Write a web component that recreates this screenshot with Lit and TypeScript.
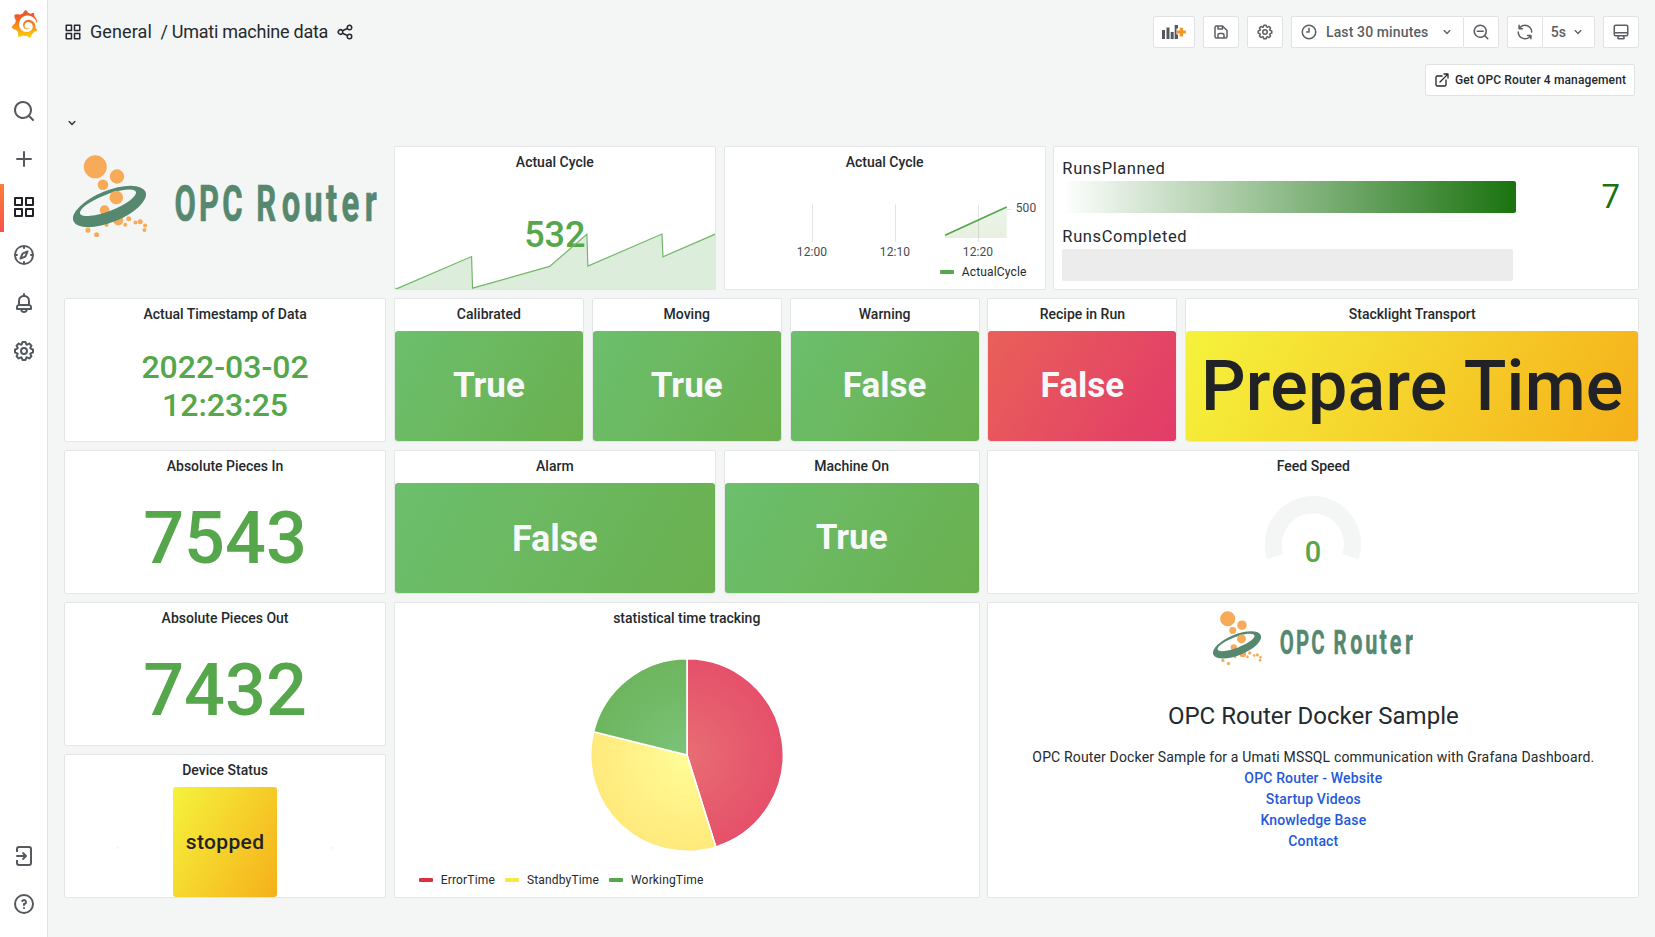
import { LitElement, html, css, svg } from "lit";
import { customElement, property } from "lit/decorators.js";

const ICONS: Record<string, string> = {
  apps: "M10,13H3a1,1,0,0,0-1,1v7a1,1,0,0,0,1,1h7a1,1,0,0,0,1-1V14A1,1,0,0,0,10,13ZM9,20H4V15H9ZM21,2H14a1,1,0,0,0-1,1v7a1,1,0,0,0,1,1h7a1,1,0,0,0,1-1V3A1,1,0,0,0,21,2ZM20,9H15V4h5Zm1,4H14a1,1,0,0,0-1,1v7a1,1,0,0,0,1,1h7a1,1,0,0,0,1-1V14A1,1,0,0,0,21,13Zm-1,7H15V15h5ZM10,2H3A1,1,0,0,0,2,3v7a1,1,0,0,0,1,1h7a1,1,0,0,0,1-1V3A1,1,0,0,0,10,2ZM9,9H4V4H9Z",
  search: "M21.71,20.29,18,16.61A9,9,0,1,0,16.61,18l3.68,3.68a1,1,0,0,0,1.42,0A1,1,0,0,0,21.71,20.29ZM11,18a7,7,0,1,1,7-7A7,7,0,0,1,11,18Z",
  zoomOut: "M21.71,20.29,18,16.61A9,9,0,1,0,16.61,18l3.68,3.68a1,1,0,0,0,1.42,0A1,1,0,0,0,21.71,20.29ZM11,18a7,7,0,1,1,7-7A7,7,0,0,1,11,18ZM15,10H7a1,1,0,0,0,0,2h8a1,1,0,0,0,0-2Z",
  plus: "M19,11H13V5a1,1,0,0,0-2,0v6H5a1,1,0,0,0,0,2h6v6a1,1,0,0,0,2,0V13h6a1,1,0,0,0,0-2Z",
  compass: "M12,2A10,10,0,1,0,22,12,10,10,0,0,0,12,2Zm1,17.93V19a1,1,0,0,0-2,0v.93A8,8,0,0,1,4.07,13H5a1,1,0,0,0,0-2H4.07A8,8,0,0,1,11,4.07V5a1,1,0,0,0,2,0V4.07A8,8,0,0,1,19.93,11H19a1,1,0,0,0,0,2h.93A8,8,0,0,1,13,19.93ZM15.14,7.55l-5,2.12a1,1,0,0,0-.52.52l-2.12,5a1,1,0,0,0,.21,1.1,1,1,0,0,0,.7.3.93.93,0,0,0,.4-.09l5-2.12a1,1,0,0,0,.52-.52l2.12-5a1,1,0,0,0-1.31-1.31Zm-2.49,5.1-2.28,1,1-2.28,2.28-1Z",
  bell: "M18,13.18V10a6,6,0,0,0-5-5.91V3a1,1,0,0,0-2,0V4.09A6,6,0,0,0,6,10v3.18A3,3,0,0,0,4,16v2a1,1,0,0,0,1,1H8.14a4,4,0,0,0,7.72,0H19a1,1,0,0,0,1-1V16A3,3,0,0,0,18,13.18ZM8,10a4,4,0,0,1,8,0v3H8Zm4,10a2,2,0,0,1-1.72-1h3.44A2,2,0,0,1,12,20Zm6-3H6V16a1,1,0,0,1,1-1H17a1,1,0,0,1,1,1Z",
  cog: "M21.32,9.55l-1.89-.63.89-1.78A1,1,0,0,0,20.13,6L18,3.87a1,1,0,0,0-1.15-.19l-1.78.89-.63-1.89A1,1,0,0,0,13.5,2h-3a1,1,0,0,0-.95.68L8.92,4.57,7.14,3.68A1,1,0,0,0,6,3.87L3.87,6a1,1,0,0,0-.19,1.15l.89,1.78-1.89.63A1,1,0,0,0,2,10.5v3a1,1,0,0,0,.68.95l1.89.63-.89,1.78A1,1,0,0,0,3.87,18L6,20.13a1,1,0,0,0,1.15.19l1.78-.89.63,1.89a1,1,0,0,0,.95.68h3a1,1,0,0,0,.95-.68l.63-1.89,1.78.89A1,1,0,0,0,18,20.13L20.13,18a1,1,0,0,0,.19-1.15l-.89-1.78,1.89-.63A1,1,0,0,0,22,13.5v-3A1,1,0,0,0,21.32,9.55ZM20,12.78l-1.2.4A2,2,0,0,0,17.64,16l.57,1.14-1.1,1.1L16,17.64a2,2,0,0,0-2.79,1.16l-.4,1.2H11.22l-.4-1.2A2,2,0,0,0,8,17.64l-1.14.57-1.1-1.1L6.36,16A2,2,0,0,0,5.2,13.18L4,12.78V11.22l1.2-.4A2,2,0,0,0,6.36,8L5.79,6.89l1.1-1.1L8,6.36A2,2,0,0,0,10.82,5.2l.4-1.2h1.56l.4,1.2A2,2,0,0,0,16,6.36l1.14-.57,1.1,1.1L17.64,8a2,2,0,0,0,1.16,2.79l1.2.4ZM12,8a4,4,0,1,0,4,4A4,4,0,0,0,12,8Zm0,6a2,2,0,1,1,2-2A2,2,0,0,1,12,14Z",
  save: "M20.71,9.29l-6-6a1,1,0,0,0-.32-.21A1.09,1.09,0,0,0,14,3H6A3,3,0,0,0,3,6V18a3,3,0,0,0,3,3H18a3,3,0,0,0,3-3V10A1,1,0,0,0,20.71,9.29ZM9,5h4V7H9Zm6,14H9V16a1,1,0,0,1,1-1h4a1,1,0,0,1,1,1Zm4-1a1,1,0,0,1-1,1H17V16a3,3,0,0,0-3-3H10a3,3,0,0,0-3,3v3H6a1,1,0,0,1-1-1V6A1,1,0,0,1,6,5H7V8A1,1,0,0,0,8,9h6a1,1,0,0,0,1-1V6.41l4,4Z",
  clock: "M12,2A10,10,0,1,0,22,12,10,10,0,0,0,12,2Zm0,18a8,8,0,1,1,8-8A8,8,0,0,1,12,20ZM12,6a1,1,0,0,0-1,1v4H9a1,1,0,0,0,0,2h3a1,1,0,0,0,1-1V7A1,1,0,0,0,12,6Z",
  down: "M17,9.17a1,1,0,0,0-1.41,0L12,12.71,8.46,9.17a1,1,0,0,0-1.41,0,1,1,0,0,0,0,1.42l4.24,4.24a1,1,0,0,0,1.42,0L17,10.59A1,1,0,0,0,17,9.17Z",
  sync: "M19.91,15.51H15.38a1,1,0,0,0,0,2h2.4A8,8,0,0,1,4,12a1,1,0,0,0-2,0,10,10,0,0,0,16.88,7.23V21a1,1,0,0,0,2,0V16.5A1,1,0,0,0,19.91,15.51ZM12,2A10,10,0,0,0,5.12,4.77V3a1,1,0,0,0-2,0V7.5a1,1,0,0,0,1,1h4.5a1,1,0,0,0,0-2H6.22A8,8,0,0,1,20,12a1,1,0,0,0,2,0A10,10,0,0,0,12,2Z",
  monitor: "M19,2H5A3,3,0,0,0,2,5V15a3,3,0,0,0,3,3H7.64l-.58,1a2,2,0,0,0,0,2,2,2,0,0,0,1.75,1h6.46A2,2,0,0,0,17,21a2,2,0,0,0,0-2l-.59-1H19a3,3,0,0,0,3-3V5A3,3,0,0,0,19,2ZM8.77,20,10,18H14l1.2,2ZM20,15a1,1,0,0,1-1,1H5a1,1,0,0,1-1-1V14H20Zm0-3H4V5A1,1,0,0,1,5,4H19a1,1,0,0,1,1,1Z",
  share: "M18,14a4,4,0,0,0-3.08,1.48l-5.1-2.35a3.64,3.64,0,0,0,0-2.26l5.1-2.35A4,4,0,1,0,14,6a4.17,4.17,0,0,0,.07.71L8.79,9.14a4,4,0,1,0,0,5.72l5.28,2.43A4.17,4.17,0,0,0,14,18a4,4,0,1,0,4-4ZM18,4a2,2,0,1,1-2,2A2,2,0,0,1,18,4ZM6,14a2,2,0,1,1,2-2A2,2,0,0,1,6,14Zm12,6a2,2,0,1,1,2-2A2,2,0,0,1,18,20Z",
  external: "M18,10.82a1,1,0,0,0-1,1V19a1,1,0,0,1-1,1H5a1,1,0,0,1-1-1V8A1,1,0,0,1,5,7h7.18a1,1,0,0,0,0-2H5A3,3,0,0,0,2,8V19a3,3,0,0,0,3,3H16a3,3,0,0,0,3-3V11.82A1,1,0,0,0,18,10.82Zm3.92-8.2a1,1,0,0,0-.54-.54A1,1,0,0,0,21,2H15a1,1,0,0,0,0,2h3.59L8.29,14.29a1,1,0,0,0,0,1.42,1,1,0,0,0,1.42,0L20,5.41V9a1,1,0,0,0,2,0V3A1,1,0,0,0,21.92,2.62Z",
  signin: "M4,8V5A3,3,0,0,1,7,2H17a3,3,0,0,1,3,3V19a3,3,0,0,1-3,3H7a3,3,0,0,1-3-3V16H6v3a1,1,0,0,0,1,1H17a1,1,0,0,0,1-1V5a1,1,0,0,0-1-1H7A1,1,0,0,0,6,5V8ZM5,11h6.6L10.3,9.7a1,1,0,0,1,1.4-1.4l3,3a1,1,0,0,1,0,1.4l-3,3a1,1,0,0,1-1.4-1.4L11.6,13H5a1,1,0,0,1,0-2Z",
  help: "M11.29,15.29a1.58,1.58,0,0,0-.12.15.76.76,0,0,0-.09.18.64.64,0,0,0-.06.18,1.36,1.36,0,0,0,0,.2.84.84,0,0,0,.08.38.9.9,0,0,0,.54.54.94.94,0,0,0,.76,0,.9.9,0,0,0,.54-.54A1,1,0,0,0,13,16a1,1,0,0,0-.29-.71A1,1,0,0,0,11.29,15.29ZM12,2A10,10,0,1,0,22,12,10,10,0,0,0,12,2Zm0,18a8,8,0,1,1,8-8A8,8,0,0,1,12,20ZM12,7A3,3,0,0,0,9.4,8.5a1,1,0,1,0,1.73,1A1,1,0,0,1,12,9a1,1,0,0,1,0,2,1,1,0,0,0-1,1v1a1,1,0,0,0,2,0v-.18A3,3,0,0,0,12,7Z",
};

@customElement("ui-icon")
class UiIcon extends LitElement {
  @property() name = "";
  @property({ type: Number }) size = 16;
  static styles = css`
    :host { display: inline-flex; flex: none; }
    .glyph { display: block; fill: currentColor; }
  `;
  render() {
    return html`<svg class="glyph" width=${this.size} height=${this.size} viewBox="0 0 24 24"><path d=${ICONS[this.name] ?? ""}></path></svg>`;
  }
}

/** Swirl-and-bubbles brand mark followed by its condensed word mark. */
@customElement("opc-logo")
class OpcLogo extends LitElement {
  static styles = css`
    :host { display: block; }
    .mark { display: block; width: 100%; }
    .green { fill: #55886f; }
    .orange { fill: #f7aa58; }
    .word { font: 700 50px Roboto, sans-serif; fill: #55886f; stroke: #55886f; stroke-width: 0.7; letter-spacing: 0; }
    .low { font-size: 53px; }
  `;
  render() {
    const k = 0.62;
    const upper: [string, number][] = [["O", 174.6], ["P", 199.2], ["C", 222.4], ["R", 256.3]];
    const lower: [string, number][] = [["o", 281.8], ["u", 304.4], ["t", 326.2], ["e", 341.8], ["r", 365]];
    const run = (l: [string, number][], cls: string) =>
      svg`<text class=${cls} y="220.3" x=${l.map((c) => (c[1] / k).toFixed(1)).join(" ")}>${l.map((c) => c[0]).join("")}</text>`;
    return html`<svg class="mark" viewBox="73 154.5 304 83">
      <g class="orange">
        <circle cx="95.3" cy="166.3" r="11.5"></circle>
        <circle cx="117" cy="176" r="7.2"></circle>
        <circle cx="103" cy="184.2" r="5.3"></circle>
        <circle cx="104.6" cy="209.7" r="4.8"></circle>
        <circle cx="118.3" cy="220" r="5"></circle>
        <circle cx="106.5" cy="224.5" r="2"></circle>
      </g>
      <path class="green" fill-rule="evenodd"
        d="M73.4,220.6 A38.9,15.8 -22 0 1 145.6,191.4 A38.9,15.8 -22 0 1 73.4,220.6Z M80.1,213.2 A29.9,8.2 -21.3 0 0 135.9,191.4 A29.9,8.2 -21.3 0 0 80.1,213.2Z"></path>
      <g class="orange">
        <circle cx="116.3" cy="197" r="6.8"></circle>
        <circle cx="128.8" cy="218.3" r="2.5"></circle>
        <circle cx="125.3" cy="224.3" r="2"></circle>
        <circle cx="135.5" cy="222.1" r="2"></circle>
        <circle cx="140.3" cy="221.3" r="2.5"></circle>
        <circle cx="145.1" cy="225" r="2"></circle>
        <circle cx="144.5" cy="229.5" r="2"></circle>
        <circle cx="88" cy="229.7" r="2.5"></circle>
        <circle cx="96.6" cy="234.4" r="2.5"></circle>
      </g>
      <g class="word" transform="scale(${k} 1)">${run(upper, "up")}${run(lower, "low")}</g>
    </svg>`;
  }
}

/** White dashboard card with an optional centred title. */
@customElement("dash-panel")
class DashPanel extends LitElement {
  @property() heading = "";
  static styles = css`
    :host {
      display: flex; flex-direction: column; box-sizing: border-box; min-width: 0; min-height: 0; margin-right: -0.3px;
      background: #fff; border: 1px solid #e4e5e6; border-radius: 2px; overflow: hidden;
    }
    .heading {
      flex: none; height: 32px; line-height: 31px; text-align: center; font-size: 14px; font-weight: 500;
      letter-spacing: 0; color: #24292e;
    }
    .body { flex: 1; min-height: 0; display: grid; }
  `;
  render() {
    return html`${this.heading ? html`<div class="heading">${this.heading}</div>` : ""}<div class="body"><slot></slot></div>`;
  }
}

const GRAFANA = "M342,161.2c-0.6-6.1-1.6-13.1-3.6-20.9c-2-7.7-5-16.2-9.4-25c-4.4-8.8-10.1-17.9-17.5-26.8c-2.9-3.5-6.1-6.9-9.5-10.2c5.1-20.3-6.2-37.9-6.2-37.9c-19.5-1.2-31.9,6.1-36.5,9.4c-0.8-0.3-1.5-0.7-2.3-1c-3.3-1.3-6.7-2.6-10.3-3.7c-3.5-1.1-7.1-2.1-10.8-3c-3.7-0.9-7.4-1.6-11.2-2.2c-0.7-0.1-1.3-0.2-2-0.3c-8.5-27.2-32.9-38.6-32.9-38.6c-27.3,17.3-32.4,41.5-32.4,41.5s-0.1,0.5-0.3,1.4c-1.5,0.4-3,0.9-4.5,1.3c-2.1,0.6-4.2,1.4-6.2,2.2c-2.1,0.8-4.1,1.6-6.2,2.5c-4.1,1.8-8.2,3.8-12.2,6c-3.9,2.2-7.7,4.6-11.4,7.1c-0.5-0.2-1-0.4-1-0.4c-37.8-14.4-71.3,2.9-71.3,2.9c-3.1,40.2,15.1,65.5,18.7,70.1c-0.9,2.5-1.7,5-2.5,7.5c-2.8,9.1-4.9,18.4-6.2,28.1c-0.2,1.4-0.4,2.8-0.5,4.2C18.8,192.7,8.5,228,8.5,228c29.1,33.5,63.1,35.6,63.1,35.6c0,0,0.1-0.1,0.1-0.1c4.3,7.7,9.3,15,14.9,21.9c2.4,2.9,4.8,5.6,7.4,8.3c-10.6,30.4,1.5,55.6,1.5,55.6c32.4,1.2,53.7-14.2,58.2-17.7c3.2,1.1,6.5,2.1,9.8,2.9c10,2.6,20.2,4.1,30.4,4.5c2.5,0.1,5.1,0.2,7.6,0.1l1.2,0l0.8,0l1.6,0l1.6-0.1l0,0.1c15.3,21.8,42.1,24.9,42.1,24.9c19.1-20.1,20.2-40.1,20.2-44.4l0,0c0,0,0-0.1,0-0.3c0-0.4,0-0.6,0-0.6l0,0c0-0.3,0-0.6,0-0.9c4-2.8,7.8-5.8,11.4-9.1c7.6-6.9,14.3-14.8,19.9-23.3c0.5-0.8,1-1.6,1.5-2.4c21.6,1.2,36.9-13.4,36.9-13.4c-3.6-22.5-16.4-33.5-19.1-35.6l-1-0.7c0.1-1.4,0.2-2.7,0.3-4.1c0.2-2.4,0.2-4.9,0.2-7.3l0-3.8l-0.2-3.5c-0.4-6.5-1-9.5-2.1-15c-2.3-9.7-6.1-18.9-11-27.2c-5-8.3-11.2-15.6-18.3-21.8c-7-6.2-14.9-11.2-23.1-14.9c-8.3-3.7-16.9-6.1-25.5-7.2c-4.3-0.6-8.6-0.8-12.9-0.7l-3.2,0.1c-2.8,0.1-5.6,0.5-8.2,1c-8.6,1.6-16.7,4.7-23.8,9c-7.1,4.3-13.3,9.6-18.3,15.6c-5,6-8.9,12.7-11.6,19.6c-2.7,6.9-4.2,14.1-4.6,21c-0.1,3-0.1,5.2,0.2,9c0.3,3.5,1,6.9,1.9,10.1c1.9,6.5,4.9,12.4,8.6,17.4c3.7,5,8.2,9.1,12.9,12.4c4.7,3.2,9.8,5.5,14.8,7c5,1.5,10,2.1,14.7,2.1c4,0,7-0.3,11-1.2c3-0.7,6-1.9,8.8-3.3c2.2-1.1,4.3-2.5,6.3-4c1.6-1.3,1.9-3.7,0.6-5.3c-1.1-1.4-3.1-1.8-4.7-0.9c-1.8,0.9-3.5,1.7-5.5,2.4c-3,1-5.6,1.4-8.5,1.6c-3,0-5.2-0.1-7.2-0.4c-3.7-0.5-7.4-1.6-10.9-3.2c-3.6-1.6-7-3.8-10.1-6.6c-3.1-2.8-5.8-6.1-7.9-9.9c-2.1-3.8-3.6-8-4.3-12.4c-0.5-3.5-0.5-8,0.3-13c1.7-9.6,6.5-19,13.9-26.1c1.9-1.8,3.9-3.4,6-4.9c2.1-1.5,4.4-2.8,6.8-3.9c2.4-1.1,4.8-2,7.4-2.7c5-1.4,10-1.8,16-1.5c2.9,0.2,5.7,0.6,8.5,1.3c5.6,1.2,11.1,3.3,16.2,6.1c10.2,5.7,18.9,14.5,24.2,25.1c2.7,5.3,4.6,11,5.5,16.9c0.6,4.5,0.8,8,0.7,12.5c-0.5,8-2,14.5-4.4,21.3c-2.4,6-5.6,11.8-9.4,17.1c-7.7,10.6-18.2,19.2-30.2,24.7c-6,2.7-12.3,4.7-18.8,5.7c-7,1.1-13,1.3-20,0.7c-7-0.5-13.9-1.8-20.7-3.7c-6.7-1.9-13.2-4.6-19.4-7.8c-12.3-6.6-23.4-15.6-32-26.5c-4.3-5.4-8.1-11.3-11.2-17.4c-3.1-6.1-5.6-12.6-7.4-19.1c-1.8-6.6-2.9-13.3-3.4-20.1c-0.5-10,0-20,2.5-31c1.9-10,5.8-21,9.6-29.5c5.7-12.2,13.1-23.1,22-31.8c10-9.5,19-14.8,30.6-20.1c11-4.4,23-7.4,39.6-8.4c10-0.4,19,0.2,27.3,1.8c11.1,2.1,21.5,5.6,31,10.3c9.5,4.6,17.9,10.3,25.3,16.5c7,6,14,13.2,18.8,19.9c7,9,13.5,20,19.1,34.8c1.5,4.4,2.6,8.3,3.5,11.7c0.3,1.4,1.6,2.3,3,2.1c1.5-0.1,2.6-1.3,2.6-2.8C342.6,170.4,342.5,166.1,342,161.2z";

const PIE = [
  { id: "p-red", from: 0, to: 162.6, stops: ["#e86d73", "#e5506a"] },
  { id: "p-yellow", from: 162.6, to: 284, stops: ["#fffd98", "#ffe97b"] },
  { id: "p-green", from: 284, to: 360, stops: ["#7cc379", "#6db55d"] },
];

const rim = (deg: number, r: number) => {
  const a = (deg * Math.PI) / 180;
  return `${(Math.sin(a) * r).toFixed(2)},${(-Math.cos(a) * r).toFixed(2)}`;
};

@customElement("app-root")
class AppRoot extends LitElement {
  static styles = css`
    :host {
      display: flex; height: 937px; width: 100%; overflow: hidden; background: #f4f5f5; color: #24292e;
      font-family: Roboto, sans-serif; font-size: 14px; letter-spacing: 0.15px;
    }
    .side {
      flex: none; width: 48px; box-sizing: border-box; background: #fff; border-right: 1px solid #e0e2e3; color: #55595e;
      display: flex; flex-direction: column;
    }
    .brand { height: 88px; padding: 10px 0 0 11px; box-sizing: border-box; }
    .brand-svg { display: block; }
    .nav { height: 48px; box-sizing: border-box; display: flex; align-items: center; justify-content: center; border-left: 4px solid transparent; padding: 0 3px 2px 0; }
    .active { border-image: linear-gradient(180deg, #f9803a, #fa4f4b) 1; border-width: 0 0 0 4px; border-style: solid; color: #202226; }
    .spacer { flex: 1; }
    .side-foot { height: 8px; }

    .main { flex: 1; min-width: 0; padding: 16px 16px 0 16px; }
    .top { display: flex; height: 32px; justify-content: space-between; align-items: center; }
    .crumbs { display: flex; align-items: center; font-size: 18px; white-space: pre; color: #24292e; }
    .folder { padding-left: 8px; letter-spacing: 0.1px; line-height: 32px; }
    .board { padding: 0 8px 0 8.5px; letter-spacing: -0.25px; line-height: 32px; }
    .tools { display: flex; gap: 8px; color: #55595e; }
    .group { display: flex; }
    .btn {
      box-sizing: border-box; height: 32px; width: 36px; background: #fff; border: 1px solid #e0e2e3; border-radius: 2px;
      display: flex; align-items: center; justify-content: center; font-weight: 500; font-size: 14px; color: #5b5f64;
    }
    .group .btn + .btn { border-left: 0; width: 35px; border-radius: 0 2px 2px 0; }
    .add { width: 42px; }
    .time { width: 173px; justify-content: flex-start; padding-left: 8px; letter-spacing: 0.12px; }
    .time-text { padding-left: 8px; flex: 1; }
    .time-caret { padding-right: 8px; }
    .group .btn.rate { width: 52px; gap: 4px; }
    .sub { display: flex; justify-content: flex-end; padding: 16px 4px 0 0; }
    .link { width: 210px; font-size: 12px; color: #24292e; gap: 5px; letter-spacing: 0.13px; }
    .row-head { height: 50px; padding: 19px 0 0 0; box-sizing: border-box; }

    .grid { display: grid; grid-template-columns: repeat(24, minmax(0, 1fr)); grid-auto-rows: 30px; gap: 8px; }
    .a1 { grid-area: 1 / 1 / span 4 / span 5; }
    .a2 { grid-area: 1 / 6 / span 4 / span 5; }
    .a3 { grid-area: 1 / 11 / span 4 / span 5; }
    .a4 { grid-area: 1 / 16 / span 4 / span 9; }
    .b1 { grid-area: 5 / 1 / span 4 / span 5; }
    .b2 { grid-area: 5 / 6 / span 4 / span 3; }
    .b3 { grid-area: 5 / 9 / span 4 / span 3; }
    .b4 { grid-area: 5 / 12 / span 4 / span 3; }
    .b5 { grid-area: 5 / 15 / span 4 / span 3; margin-right: 0; }
    .b6 { grid-area: 5 / 18 / span 4 / span 7; }
    .c1 { grid-area: 9 / 1 / span 4 / span 5; }
    .c2 { grid-area: 9 / 6 / span 4 / span 5; }
    .c3 { grid-area: 9 / 11 / span 4 / span 4; }
    .c4 { grid-area: 9 / 15 / span 4 / span 10; }
    .d1 { grid-area: 13 / 1 / span 4 / span 5; }
    .d2 { grid-area: 13 / 6 / span 8 / span 9; }
    .d3 { grid-area: 13 / 15 / span 8 / span 10; }
    .e1 { grid-area: 17 / 1 / span 4 / span 5; }

    .logo-box { padding: 8.5px 9px; }
    .num { place-self: center; color: #56a64b; font-weight: 500; text-align: center; line-height: 1.2; letter-spacing: 0; }
    .big { font-size: 72px; padding-top: 3px; }
    .date { font-size: 32px; white-space: pre; }
    .stack { display: grid; }
    .stack > * { grid-area: 1 / 1; }
    .cycle { font-size: 36px; padding: 3px 0 0 0; }
    .plot { display: block; width: 100%; height: 100%; }
    .tile { display: flex; align-items: center; justify-content: center; border-radius: 3px; font-weight: 700; font-size: 35px; line-height: 1.2; color: #f7f8fa; letter-spacing: 0; padding-bottom: 1px; }
    .tile36 { font-size: 36px; padding: 3px 0 0; }
    .green { background: linear-gradient(120deg, #6cbf6d, #6ab04f); }
    .red { background: linear-gradient(120deg, #e96058, #e23b69); }
    .yellow { background: linear-gradient(120deg, #f5f33c, #f5b01a); color: #202226; font-weight: 500; }
    .prepare { font-size: 70px; white-space: nowrap; letter-spacing: 0.25px; padding: 0; }
    .status { display: flex; align-items: center; justify-content: space-between; padding: 0 51px; }
    .dot { width: 3px; height: 3px; border-radius: 2px; background: #f6f7f7; margin-top: 11px; }
    .stopped { width: 104px; align-self: stretch; font-size: 21px; box-sizing: border-box; letter-spacing: 0.35px; padding: 2px 0 0; }
    .runs { padding: 11px 8px 0 8px; display: flex; flex-direction: column; }
    .run-label { font-size: 16.5px; height: 23px; line-height: 21px; letter-spacing: 0.6px; }
    .run-row { display: flex; justify-content: space-between; align-items: center; height: 32px; padding-right: 10px; margin-bottom: 13px; }
    .run-bar { height: 32px; width: 454px; border-radius: 2px; background: linear-gradient(90deg, #fff, #1a730f); }
    .run-empty { width: 451px; background: #ececec; }
    .run-val { color: #1a730f; font-size: 33px; line-height: 31px; height: 32px; }
    .axis { font: 400 12px Roboto, sans-serif; fill: #464c54; letter-spacing: 0.1px; }
    .ts { display: grid; grid-template-rows: 86px auto; }
    .legend { display: flex; align-items: center; gap: 8px; font-size: 12px; letter-spacing: 0.16px; height: 14px; }
    .ts-legend { justify-content: flex-end; padding-right: 18px; }
    .swatch { width: 14px; height: 4px; border-radius: 1px; flex: none; }
    .s-green { background: #56a64b; }
    .s-red { background: #e02f44; }
    .s-yellow { background: #fde742; }
    .item { display: flex; align-items: center; gap: 8px; }
    .pie { display: grid; grid-template-rows: 1fr 24px; }
    .pie-plot { place-self: center; display: block; padding-top: 2px; }
    .pie-legend { padding-left: 24px; gap: 10px; }
    .slice { stroke: #fff; stroke-width: 1.6; stroke-linejoin: round; }
    .gauge-num { font: 500 29px Roboto, sans-serif; fill: #56a64b; letter-spacing: 0; }
    .text { display: flex; flex-direction: column; align-items: center; padding-top: 8px; line-height: 21px; }
    .text-logo { width: 200px; }
    .title { margin: 32px 0 13px; font-size: 24px; font-weight: 400; line-height: 36px; letter-spacing: 0; }
    .a { color: #2459dc; font-weight: 500; }
  `;

  nav(name: string, active = false) {
    return html`<div class="nav ${active ? "active" : ""}"><ui-icon name=${name} size="24"></ui-icon></div>`;
  }

  render() {
    return html`
      <div class="side">
        <div class="brand">
          <svg class="brand-svg" width="27" height="28" viewBox="0 0 351 365">
            <defs><linearGradient id="gl" gradientUnits="userSpaceOnUse" x1="175" y1="430" x2="175" y2="90"><stop offset="0" stop-color="#fff100"></stop><stop offset="1" stop-color="#f05a28"></stop></linearGradient></defs>
            <path fill="url(#gl)" d=${GRAFANA}></path>
          </svg>
        </div>
        ${this.nav("search")} ${this.nav("plus")} ${this.nav("apps", true)} ${this.nav("compass")} ${this.nav("bell")} ${this.nav("cog")}
        <div class="spacer"></div>
        ${this.nav("signin")} ${this.nav("help")}
        <div class="side-foot"></div>
      </div>
      <div class="main">
        <div class="top">
          <div class="crumbs"><ui-icon name="apps" size="18"></ui-icon><span class="folder">General</span><span class="board">/ Umati machine data</span><ui-icon name="share" size="18"></ui-icon></div>
          <div class="tools">
            <div class="btn add">
              <svg width="24" height="14" viewBox="0 0 24 14">
                <path fill="#55595e" d="M0,5h3v9H0zM4.5,2.5h3v11.5h-3zM8.7,7h3v7h-3zM12.7,0h3.300v3.500h-1.500v6h1.500v4.500h-3.300z"></path>
                <path fill="#f79520" d="M17.700,2.800h3.200v2.800h3v3h-3v2.800h-3.200v-2.800h-3v-3h3z"></path>
              </svg>
            </div>
            <div class="btn"><ui-icon name="save" size="18"></ui-icon></div>
            <div class="btn"><ui-icon name="cog" size="18"></ui-icon></div>
            <div class="group">
              <div class="btn time"><ui-icon name="clock" size="18"></ui-icon><span class="time-text">Last 30 minutes</span><ui-icon class="time-caret" name="down" size="16"></ui-icon></div>
              <div class="btn"><ui-icon name="zoomOut" size="18"></ui-icon></div>
            </div>
            <div class="group">
              <div class="btn"><ui-icon name="sync" size="18"></ui-icon></div>
              <div class="btn rate"><span>5s</span><ui-icon name="down" size="16"></ui-icon></div>
            </div>
            <div class="btn"><ui-icon name="monitor" size="18"></ui-icon></div>
          </div>
        </div>
        <div class="sub"><div class="btn link"><ui-icon name="external" size="16"></ui-icon><span>Get OPC Router 4 management</span></div></div>
        <div class="row-head"><ui-icon name="down" size="16"></ui-icon></div>
        <div class="grid">
          <div class="a1 logo-box"><opc-logo></opc-logo></div>
          <dash-panel class="a2" heading="Actual Cycle">
            <div class="stack">
              <div class="num cycle">532</div>
              <svg class="plot" viewBox="394.8 179 319.8 110" preserveAspectRatio="none">
                <path fill="#56a64b" fill-opacity="0.2" d="M395,289L398,288L471.3,256.5L472.3,288L549.3,266.3L586.5,234.3L587.5,266L661.5,234L662.5,256.7L715,234V289Z"></path>
                <path fill="none" stroke="#73b66a" stroke-width="1.2" d="M395,288.6L398,288L471.3,256.5L472.3,288L549.3,266.3L586.5,234.3L587.5,266L661.5,234L662.5,256.7L715,234"></path>
              </svg>
            </div>
          </dash-panel>
          <dash-panel class="a3" heading="Actual Cycle">
            <div class="ts">
              <svg class="plot" viewBox="725 179 320 86">
                <defs><linearGradient id="area" x1="0" y1="0" x2="0" y2="1"><stop offset="0" stop-color="#56a64b" stop-opacity="0.12"></stop><stop offset="1" stop-color="#6a9a3b" stop-opacity="0.15"></stop></linearGradient></defs>
                <path stroke="#e3e4e5" d="M812.5,204.5V242M895.5,204.5V242M978.5,204.5V242M1007,209.5H1011.5"></path>
                <path fill="url(#area)" d="M945,235L1006.7,207V238H945Z"></path>
                <path stroke="#56a64b" stroke-width="1.8" fill="none" d="M945,235.2L1006.7,207"></path>
                <g class="axis" text-anchor="middle">
                  <text x="812" y="256.3">12:00</text><text x="895" y="256.3">12:10</text><text x="978" y="256.3">12:20</text><text x="1026" y="212.3">500</text>
                </g>
              </svg>
              <div class="legend ts-legend"><span class="swatch s-green"></span><span>ActualCycle</span></div>
            </div>
          </dash-panel>
          <dash-panel class="a4">
            <div class="runs">
              <div class="run-label">RunsPlanned</div>
              <div class="run-row"><div class="run-bar"></div><div class="run-val">7</div></div>
              <div class="run-label">RunsCompleted</div>
              <div class="run-row"><div class="run-bar run-empty"></div></div>
            </div>
          </dash-panel>

          <dash-panel class="b1" heading="Actual Timestamp of Data"><div class="num date">2022-03-02
12:23:25</div></dash-panel>
          <dash-panel class="b2" heading="Calibrated"><div class="tile green">True</div></dash-panel>
          <dash-panel class="b3" heading="Moving"><div class="tile green">True</div></dash-panel>
          <dash-panel class="b4" heading="Warning"><div class="tile green">False</div></dash-panel>
          <dash-panel class="b5" heading="Recipe in Run"><div class="tile red">False</div></dash-panel>
          <dash-panel class="b6" heading="Stacklight Transport"><div class="tile yellow prepare">Prepare Time</div></dash-panel>

          <dash-panel class="c1" heading="Absolute Pieces In"><div class="num big">7543</div></dash-panel>
          <dash-panel class="c2" heading="Alarm"><div class="tile green tile36">False</div></dash-panel>
          <dash-panel class="c3" heading="Machine On"><div class="tile green">True</div></dash-panel>
          <dash-panel class="c4" heading="Feed Speed">
            <svg class="plot" viewBox="988 483 650 110">
              <path fill="#f4f5f5" d="M1267.2,559.2A48.2,48.2 0 1 1 1358.8,559.2L1342.5,553.9A31,31 0 1 0 1283.5,553.9Z"></path>
              <text class="gauge-num" x="1313" y="561.7" text-anchor="middle">0</text>
            </svg>
          </dash-panel>

          <dash-panel class="d1" heading="Absolute Pieces Out"><div class="num big">7432</div></dash-panel>
          <dash-panel class="d2" heading="statistical time tracking">
            <div class="pie">
              <svg class="pie-plot" width="194" height="194" viewBox="-97 -97 194 194">
                <defs>${PIE.map((p) => svg`<radialGradient id=${p.id} gradientUnits="userSpaceOnUse" cx="0" cy="0" r="96"><stop offset="0" stop-color=${p.stops[0]}></stop><stop offset="1" stop-color=${p.stops[1]}></stop></radialGradient>`)}</defs>
                ${PIE.map((p) => svg`<path class="slice" fill="url(#${p.id})" d="M0,0L${rim(p.from, 96.3)}A96.3,96.3 0 0 1 ${rim(p.to, 96.3)}Z"></path>`)}
              </svg>
              <div class="legend pie-legend">
                <span class="item"><span class="swatch s-red"></span>ErrorTime</span>
                <span class="item"><span class="swatch s-yellow"></span>StandbyTime</span>
                <span class="item"><span class="swatch s-green"></span>WorkingTime</span>
              </div>
            </div>
          </dash-panel>
          <dash-panel class="d3">
            <div class="text">
              <opc-logo class="text-logo"></opc-logo>
              <div class="title">OPC Router Docker Sample</div>
              <div>OPC Router Docker Sample for a Umati MSSQL communication with Grafana Dashboard.</div>
              <div class="a">OPC Router - Website</div>
              <div class="a">Startup Videos</div>
              <div class="a">Knowledge Base</div>
              <div class="a">Contact</div>
            </div>
          </dash-panel>

          <dash-panel class="e1" heading="Device Status">
            <div class="status"><span class="dot"></span><div class="tile yellow stopped">stopped</div><span class="dot"></span></div>
          </dash-panel>
        </div>
      </div>
    `;
  }
}
